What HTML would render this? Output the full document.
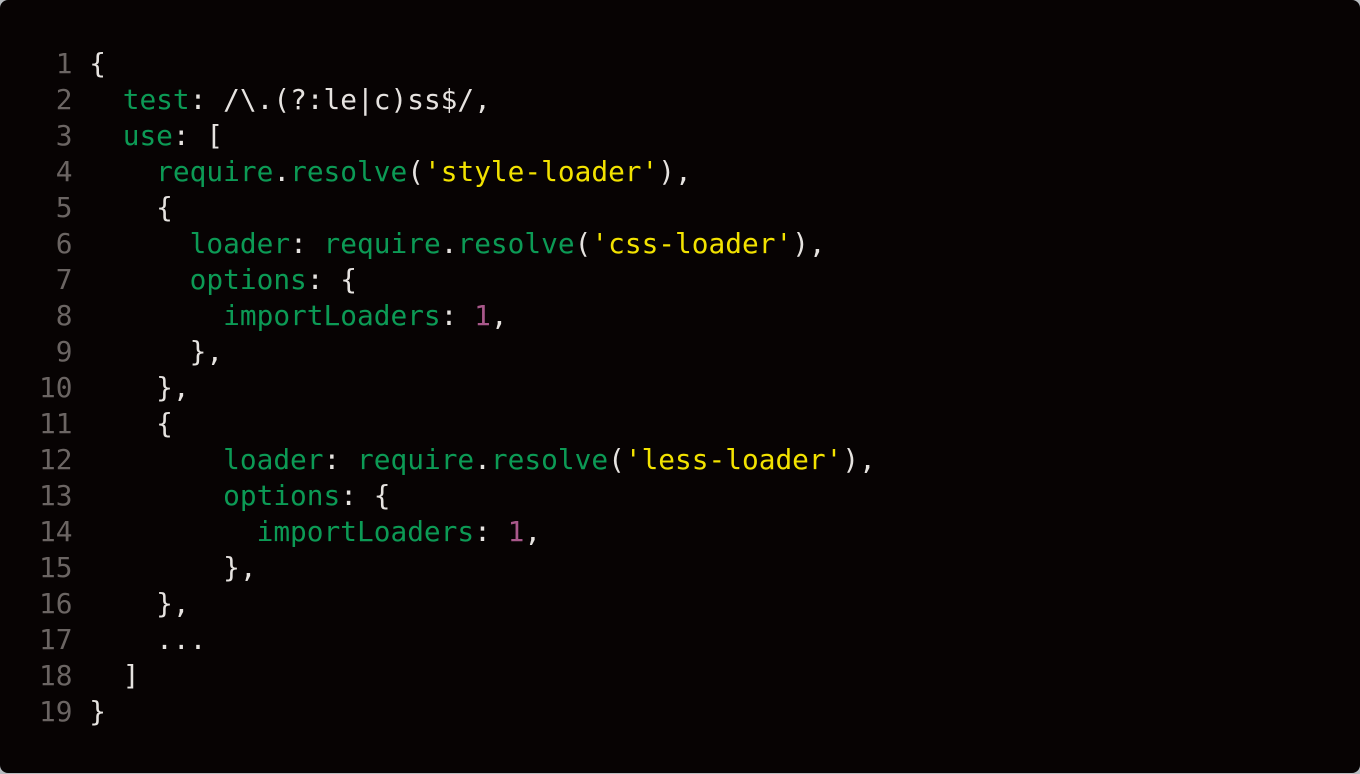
<!DOCTYPE html>
<html><head><style>
html,body{margin:0;padding:0;background:#b8bcc0;width:1360px;height:774px;overflow:hidden}
.box{position:absolute;left:0;top:0;width:1360px;height:773px;background:#070303;border-radius:8px}
pre{position:absolute;left:39px;top:46px;margin:0;font-family:"DejaVu Sans Mono","Liberation Mono",monospace;font-size:27.8px;line-height:36px;color:#e6e3e0}
.n{color:#6b6563}.g{color:#0c9a55}.y{color:#f2e200}.p{color:#a8588a}
</style></head><body><div class="box"><pre><span class="n"> 1</span> {
<span class="n"> 2</span>   <span class="g">test</span>: /\.(?:le|c)ss$/,
<span class="n"> 3</span>   <span class="g">use</span>: [
<span class="n"> 4</span>     <span class="g">require</span>.<span class="g">resolve</span>(<span class="y">'style-loader'</span>),
<span class="n"> 5</span>     {
<span class="n"> 6</span>       <span class="g">loader</span>: <span class="g">require</span>.<span class="g">resolve</span>(<span class="y">'css-loader'</span>),
<span class="n"> 7</span>       <span class="g">options</span>: {
<span class="n"> 8</span>         <span class="g">importLoaders</span>: <span class="p">1</span>,
<span class="n"> 9</span>       },
<span class="n">10</span>     },
<span class="n">11</span>     {
<span class="n">12</span>         <span class="g">loader</span>: <span class="g">require</span>.<span class="g">resolve</span>(<span class="y">'less-loader'</span>),
<span class="n">13</span>         <span class="g">options</span>: {
<span class="n">14</span>           <span class="g">importLoaders</span>: <span class="p">1</span>,
<span class="n">15</span>         },
<span class="n">16</span>     },
<span class="n">17</span>     ...
<span class="n">18</span>   ]
<span class="n">19</span> }</pre></div></body></html>
